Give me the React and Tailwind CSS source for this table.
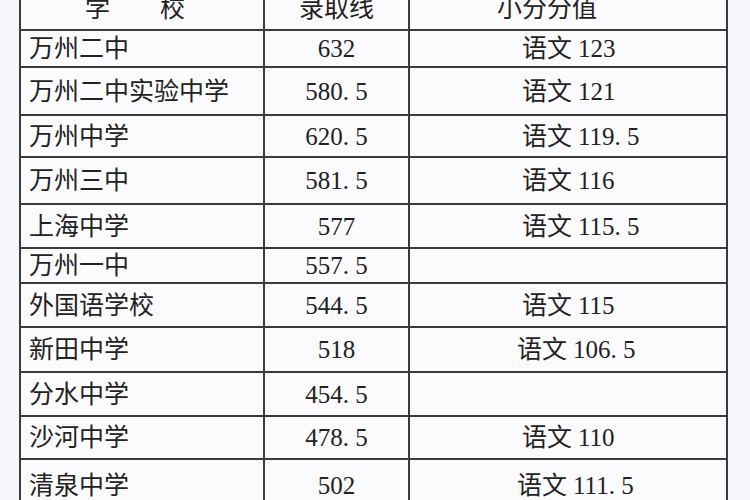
import React from "react";

const rows = [
    { name: "万州二中", score: "632", sub: "123", h: "h-[35px]", pl: "pl-[112px]" },
    { name: "万州二中实验中学", score: "580.5", sub: "121", h: "h-[46px]", pl: "pl-[112px]" },
    { name: "万州中学", score: "620.5", sub: "119.5", h: "h-[40px]", pl: "pl-[112px]" },
    { name: "万州三中", score: "581.5", sub: "116", h: "h-[45px]", pl: "pl-[112px]" },
    { name: "上海中学", score: "577", sub: "115.5", h: "h-[42px]", pl: "pl-[112px]" },
    { name: "万州一中", score: "557.5", sub: "", h: "h-[33px]", pl: "pl-[112px]" },
    { name: "外国语学校", score: "544.5", sub: "115", h: "h-[42px]", pl: "pl-[112px]" },
    { name: "新田中学", score: "518", sub: "106.5", h: "h-[43px]", pl: "pl-[107px]" },
    { name: "分水中学", score: "454.5", sub: "", h: "h-[42px]", pl: "pl-[112px]" },
    { name: "沙河中学", score: "478.5", sub: "110", h: "h-[41px]", pl: "pl-[112px]" },
    { name: "清泉中学", score: "502", sub: "111.5", h: "h-[50px]", pl: "pl-[107px]" },
];

// 半角的小数点，跟原表格的宋体一样占半个字宽
const Num = ({ value }) => {
    const [a, b] = value.split(".");
    return (
        <span>
            {a}
            {b !== undefined && (
                <>
                    <span className="inline-block w-[0.5em]">.</span>
                    {b}
                </>
            )}
        </span>
    );
};

const App = () => {
    return (
        <div className="h-screen w-full overflow-hidden bg-[#f5f6fa] text-[#222222] font-['Liberation_Serif','Noto_Sans_CJK_SC',serif] text-[25px] leading-none">
            <div className="-mt-[23px] ml-[19px] w-max grid grid-cols-[242px_143px_316px] gap-[2px] p-[2px] bg-[#3b3b3b]">
                {/* header, cut by the top edge */}
                <div className="h-[50px] pt-[8px] bg-[#fbfbfd] flex items-center pl-[64px] gap-[50px]">
                    <span>学</span>
                    <span>校</span>
                </div>
                <div className="h-[50px] pt-[8px] bg-[#fbfbfd] flex items-center justify-center">录取线</div>
                <div className="h-[50px] pt-[8px] bg-[#fbfbfd] flex items-center pl-[87px]">小分分值</div>

                {rows.map((row) => (
                    <React.Fragment key={row.name}>
                        <div className={`${row.h} bg-[#fbfbfd] flex items-center pl-[8px]`}>{row.name}</div>
                        <div className={`${row.h} bg-[#fbfbfd] flex items-center justify-center`}>
                            <Num value={row.score} />
                        </div>
                        <div className={`${row.h} ${row.pl} bg-[#fbfbfd] flex items-center`}>
                            {row.sub && (
                                <>
                                    <span>语文</span>
                                    <span className="ml-[6px]"><Num value={row.sub} /></span>
                                </>
                            )}
                        </div>
                    </React.Fragment>
                ))}
            </div>
        </div>
    );
};

export default App;
